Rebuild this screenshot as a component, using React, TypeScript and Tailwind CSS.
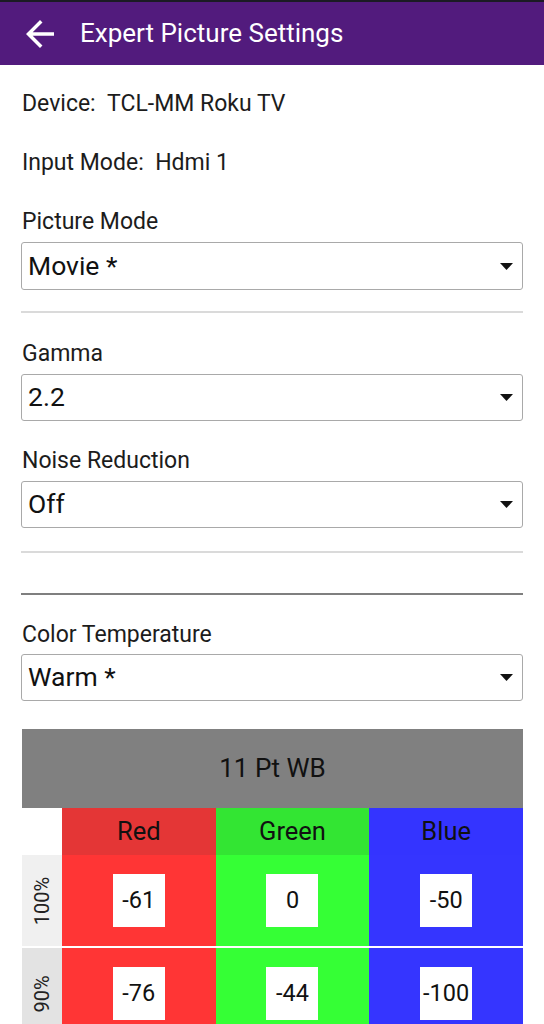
import type { ReactNode } from "react";

const font = { fontFamily: "Roboto, 'Noto Sans', sans-serif" };

function Caret() {
  return (
    <svg width="13" height="7" viewBox="0 0 13 7" className="shrink-0" aria-hidden="true">
      <path d="M0 0h13L6.5 7z" fill="#111" />
    </svg>
  );
}

function Dropdown({ value, className }: { value: string; className: string }) {
  return (
    <div
      className={`flex h-[47px] items-center justify-between rounded-[3px] border-[1.5px] border-[#a9a9a9] pl-[6px] pr-[9px] ${className}`}
    >
      <span className="text-[26.5px] leading-none text-[#111]">{value}</span>
      <Caret />
    </div>
  );
}

function Label({ children, className }: { children: ReactNode; className: string }) {
  return (
    <div className={`flex h-[32px] items-center pt-[4px] text-[23px] text-[#1c1c1c] ${className}`}>
      {children}
    </div>
  );
}

const rows = [
  { pct: "100%", labelBg: "bg-[#f0f0f0]", values: ["-61", "0", "-50"] },
  { pct: "90%", labelBg: "bg-[#e3e3e3]", values: ["-76", "-44", "-100"] },
];

const cellColors = ["bg-[#ff3535]", "bg-[#35ff35]", "bg-[#3535ff]"];

export default function App() {
  return (
    <div className="h-[1024px] w-[544px] overflow-hidden bg-white" style={font}>
      <header className="flex h-[65px] items-center border-t-2 border-[#1b1b24] bg-[#521b7d]">
        <svg width="42" height="42" viewBox="0 0 24 24" className="ml-[19px]" aria-hidden="true">
          <path d="M20 11H7.83l5.59-5.59L12 4l-8 8 8 8 1.41-1.41L7.83 13H20v-2z" fill="#fff" />
        </svg>
        <h1 className="ml-[19px] text-[26px] font-normal text-white">Expert Picture Settings</h1>
      </header>

      <main className="flex flex-col px-[21px]">
        <Label className="mt-[21px] pl-px">Device:&nbsp;&nbsp;TCL-MM Roku TV</Label>
        <Label className="mt-[27px] pl-px">Input Mode:&nbsp;&nbsp;Hdmi 1</Label>
        <Label className="mt-[27px] pl-px">Picture Mode</Label>
        <Dropdown value="Movie *" className="mt-[6px] h-[48px]" />
        <div className="mt-[21px] h-[2px] bg-[#dadada]" />

        <Label className="mt-[23px] pl-px">Gamma</Label>
        <Dropdown value="2.2" className="mt-[6px]" />
        <Label className="mt-[22px] pl-px">Noise Reduction</Label>
        <Dropdown value="Off" className="mt-[6px]" />
        <div className="mt-[23px] h-[2px] bg-[#dadada]" />
        <div className="mt-[40px] h-[2px] bg-[#7f7f7f]" />

        <Label className="mt-[22px] pl-px">Color Temperature</Label>
        <Dropdown value="Warm *" className="mt-[5px]" />

        <section className="mt-[28px] ml-px">
          <div className="flex h-[79px] items-center justify-center bg-[#808080] text-[26px] text-[#111]">
            11 Pt WB
          </div>
          <div className="grid h-[47px] grid-cols-[40px_1fr_1fr_1fr] text-[25.5px] text-[#111]">
            <div className="bg-white" />
            <div className="flex items-center justify-center bg-[#e43636]">Red</div>
            <div className="flex items-center justify-center bg-[#33e533]">Green</div>
            <div className="flex items-center justify-center bg-[#3434ff]">Blue</div>
          </div>
          <div className="flex flex-col gap-[2px]">
            {rows.map((row) => (
              <div key={row.pct} className="grid h-[91px] grid-cols-[40px_1fr_1fr_1fr]">
                <div className={`flex items-center justify-center ${row.labelBg}`}>
                  <span className="-rotate-90 whitespace-nowrap text-[20px] text-[#222]">{row.pct}</span>
                </div>
                {row.values.map((v, i) => (
                  <div key={i} className={`flex items-center justify-center ${cellColors[i]}`}>
                    <div className="flex h-[53px] w-[52px] items-center justify-center bg-white text-[23.5px] text-[#111]">
                      {v}
                    </div>
                  </div>
                ))}
              </div>
            ))}
          </div>
        </section>
      </main>
    </div>
  );
}
